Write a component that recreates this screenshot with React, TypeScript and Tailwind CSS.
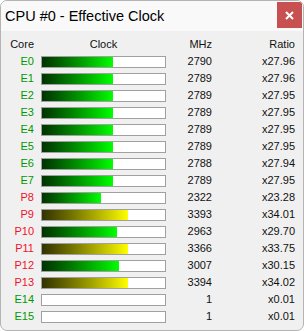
import { FC } from 'react'

interface Row {
  core: string
  mhz: number
  ratio: string
  perf: boolean
  yellow?: boolean
}

const rows: Row[] = [
  { core: 'E0', mhz: 2790, ratio: 'x27.96', perf: false },
  { core: 'E1', mhz: 2789, ratio: 'x27.96', perf: false },
  { core: 'E2', mhz: 2789, ratio: 'x27.95', perf: false },
  { core: 'E3', mhz: 2789, ratio: 'x27.95', perf: false },
  { core: 'E4', mhz: 2789, ratio: 'x27.95', perf: false },
  { core: 'E5', mhz: 2789, ratio: 'x27.95', perf: false },
  { core: 'E6', mhz: 2788, ratio: 'x27.94', perf: false },
  { core: 'E7', mhz: 2789, ratio: 'x27.95', perf: false },
  { core: 'P8', mhz: 2322, ratio: 'x23.28', perf: true },
  { core: 'P9', mhz: 3393, ratio: 'x34.01', perf: true, yellow: true },
  { core: 'P10', mhz: 2963, ratio: 'x29.70', perf: true },
  { core: 'P11', mhz: 3366, ratio: 'x33.75', perf: true, yellow: true },
  { core: 'P12', mhz: 3007, ratio: 'x30.15', perf: true },
  { core: 'P13', mhz: 3394, ratio: 'x34.02', perf: true, yellow: true },
  { core: 'E14', mhz: 1, ratio: 'x0.01', perf: false },
  { core: 'E15', mhz: 1, ratio: 'x0.01', perf: false },
]

const Bar: FC<{ mhz: number; yellow?: boolean }> = ({ mhz, yellow }) => {
  const fill = Math.round(mhz * 0.02545)
  return (
    <div className="h-[12px] w-[125px] border border-[#a0a0a0] bg-white">
      {fill > 1 && (
        <div
          className={
            yellow
              ? 'h-full bg-gradient-to-r from-[#333300] to-[#ffff00]'
              : 'h-full bg-gradient-to-r from-[#003300] to-[#00ff00]'
          }
          style={{ width: fill }}
        />
      )}
    </div>
  )
}

const App: FC = () => {
  return (
    <div className="w-[304px] h-[331px] bg-white">
      <div className="w-full h-full rounded-[7px] border border-[#b4b4b4] bg-[#f0f0f0] overflow-hidden flex flex-col">
        <div className="h-[30px] bg-[#f9f9f9] flex items-start justify-between pl-[4px] shrink-0">
          <span className="mt-[6px] text-[14.5px] leading-[19px] text-black font-['Liberation_Sans',sans-serif]">
            CPU #0 - Effective Clock
          </span>
          <div className="mt-[1px] mr-[1px] w-[25px] h-[26px] bg-[#c75050] flex items-center justify-center">
            <svg width="9" height="9" viewBox="0 0 9 9">
              <path d="M1 1 L8 8 M8 1 L1 8" stroke="white" strokeWidth="2" />
            </svg>
          </div>
        </div>
        <div className="pt-[5px] font-['Liberation_Sans',sans-serif] text-[11px] text-[#111]">
          <div className="grid grid-cols-[33px_7px_125px_46px_83px] h-[17px] items-center">
            <span className="text-right">Core</span>
            <span />
            <span className="text-center">Clock</span>
            <span className="text-right">MHz</span>
            <span className="text-right">Ratio</span>
          </div>
          {rows.map((r) => (
            <div
              key={r.core}
              className="grid grid-cols-[33px_7px_125px_46px_83px] h-[17px] items-center"
            >
              <span className={r.perf ? 'text-right text-[#f0102a]' : 'text-right text-[#009a00]'}>
                {r.core}
              </span>
              <span />
              <Bar mhz={r.mhz} yellow={r.yellow} />
              <span className="text-right">{r.mhz}</span>
              <span className="text-right">{r.ratio}</span>
            </div>
          ))}
        </div>
      </div>
    </div>
  )
}

export default App
